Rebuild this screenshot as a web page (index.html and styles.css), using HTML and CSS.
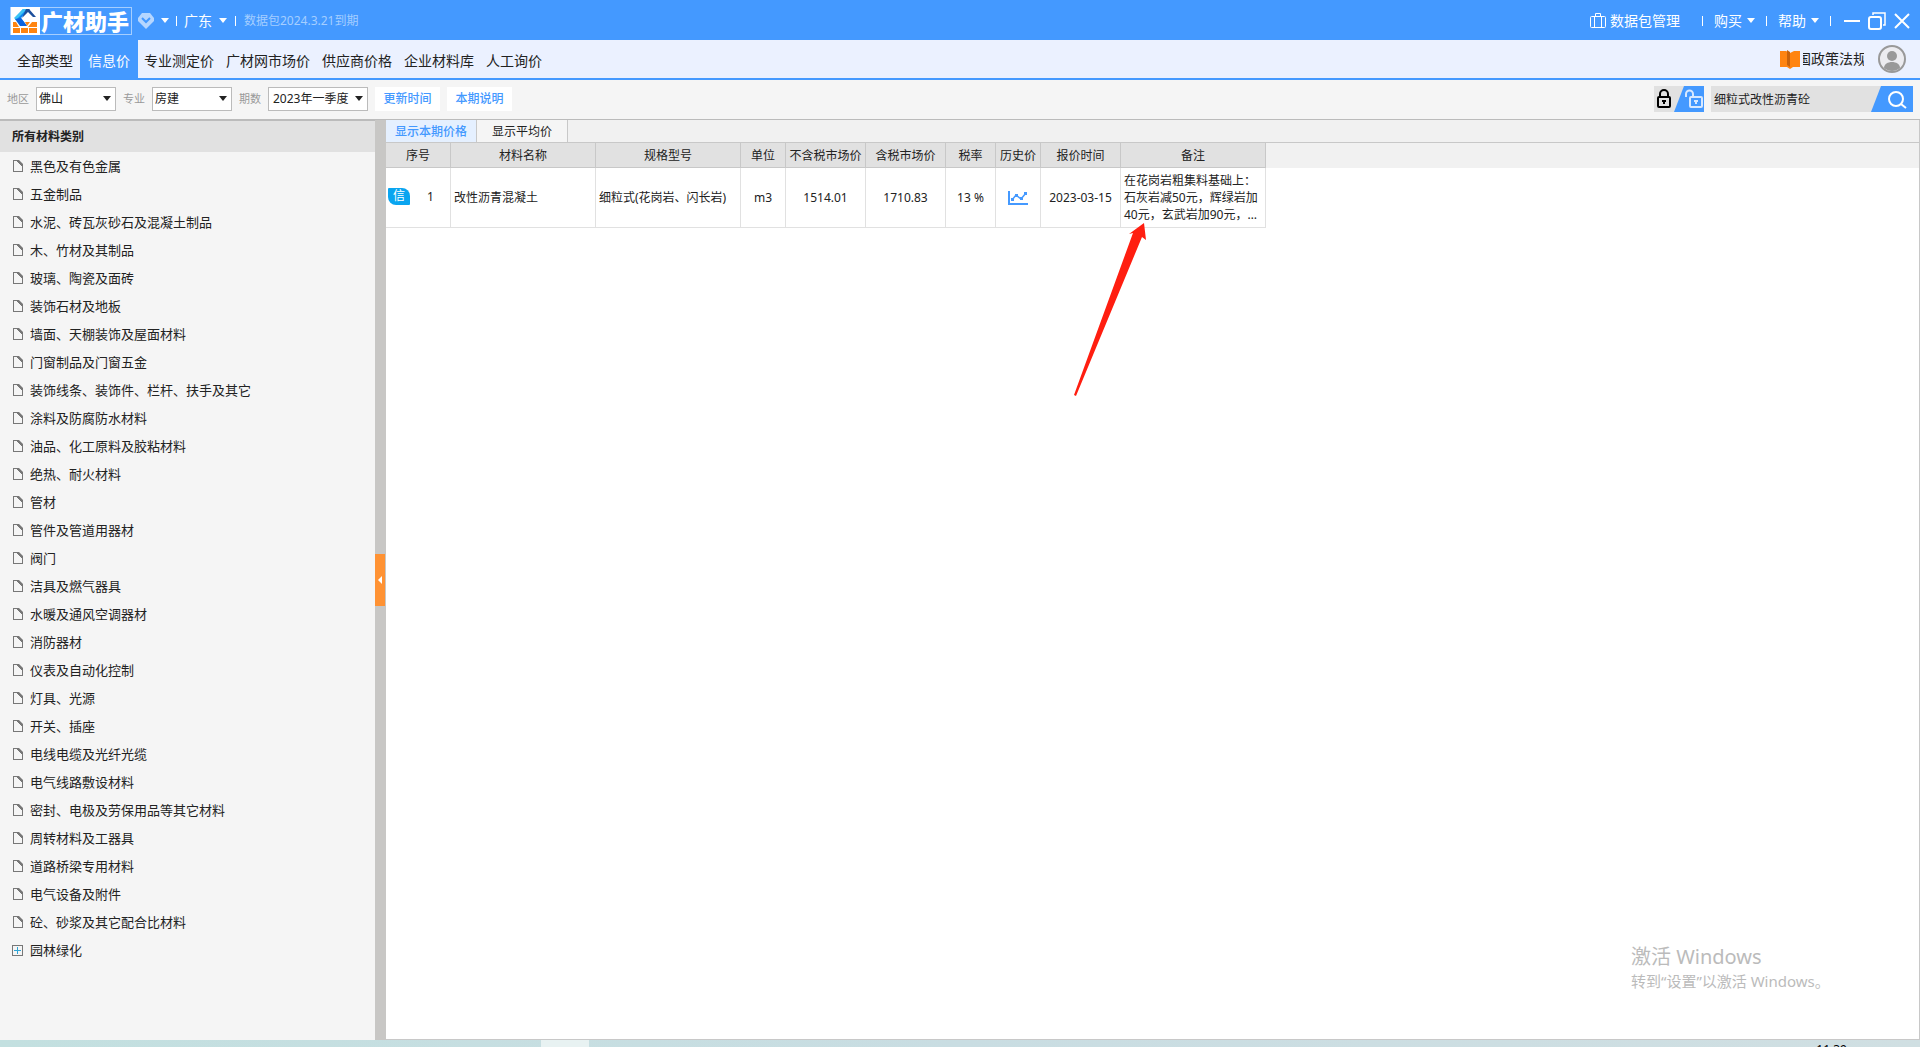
FILE: index.html
```html
<!DOCTYPE html>
<html lang="zh-CN">
<head>
<meta charset="utf-8">
<title>广材助手</title>
<link rel="stylesheet" href="styles.css">
</head>
<body>
<div class="app">
  <header class="titlebar">
    <div class="brand">
      <svg class="brand-mark" viewBox="0 0 29 28" aria-hidden="true">
        <rect width="29" height="28" fill="#fff"/>
        <path d="M12 2h7l-9 9 6 8h-5l-7-8z" fill="#0a84f0"/>
        <path d="M12 2h4L5 13l-2-2z" fill="#3cc4f5"/>
        <path d="M15 2h3l7 8h-3l-5-5-6 6z" fill="#1c4f9c"/>
        <path d="M4 12l5 7h7l-6-8z" fill="#0b63e0"/>
        <path d="M2 15h3l3 5H2zM14 15h5l-3 4zM21 15h5v5h-9zM2 21h7v5H2zM10 21h7v5h-7zM18 21h8v5h-8z" fill="#ff8410"/>
      </svg>
      <h1 class="brand-name">广材助手</h1>
    </div>
    <button class="title-btn gem" aria-label="会员">
      <svg width="16" height="16" viewBox="0 0 16 16"><path d="M4 0h8l4 5v3l-8 8-8-8V5z" fill="#b5d6ff"/><path d="M4 5l4 4 4-4" fill="none" stroke="#4499ff" stroke-width="2"/></svg>
      <i class="caret"></i>
    </button>
    <i class="bar"></i>
    <button class="title-btn region">广东<i class="caret"></i></button>
    <i class="bar"></i>
    <span class="expiry">数据包2024.3.21到期</span>
    <div class="title-right">
      <button class="title-btn package">
        <svg width="16" height="16" viewBox="0 0 16 16" fill="none" stroke="#fff" stroke-width="1"><rect x=".5" y="3.500" width="15" height="11" rx="1"/><path d="M5.500 3V.5h5V3M4.500 4v10M11.500 4v10"/></svg>
        数据包管理
      </button>
      <i class="bar"></i>
      <button class="title-btn">购买<i class="caret"></i></button>
      <i class="bar"></i>
      <button class="title-btn">帮助<i class="caret"></i></button>
      <i class="bar"></i>
      <div class="window-btns">
        <button class="title-btn" aria-label="最小化"><svg width="16" height="16" viewBox="0 0 16 16"><path d="M0 8h16" stroke="#fff" stroke-width="2"/></svg></button>
        <button class="title-btn" aria-label="还原"><svg width="18" height="18" viewBox="0 0 18 18" fill="none" stroke="#fff" stroke-width="2"><rect x="1" y="5" width="12" height="12" rx="2"/><path d="M5 3V1h12v12h-2" stroke-width="1.500"/></svg></button>
        <button class="title-btn" aria-label="关闭"><svg width="16" height="16" viewBox="0 0 16 16"><path d="M1 1l14 14M15 1L1 15" stroke="#fff" stroke-width="2"/></svg></button>
      </div>
    </div>
  </header>

  <nav class="nav">
    <a href="#" class="nav-first">全部类型</a>
    <a href="#" class="active">信息价</a>
    <a href="#">专业测定价</a>
    <a href="#">广材网市场价</a>
    <a href="#">供应商价格</a>
    <a href="#">企业材料库</a>
    <a href="#">人工询价</a>
    <div class="nav-right">
      <a href="#" class="policy">
        <svg width="20" height="19" viewBox="0 0 20 19"><path d="M0 1h6l4 2 4-2h6v16h-7l-3 2-3-2H0z" fill="#ff8410"/><path d="M7 0l3 2v15l-3-2z" fill="#c8620a"/></svg>
        <span class="policy-text">国政策法规</span>
      </a>
      <button class="avatar" aria-label="用户">
        <svg width="28" height="28" viewBox="0 0 28 28"><circle cx="14" cy="14" r="13" fill="#ececf0" stroke="#999" stroke-width="2"/><circle cx="14" cy="11" r="5" fill="#999"/><path d="M6 23c0-8 16-8 16 0-5 4-11 4-16 0z" fill="#999"/></svg>
      </button>
    </div>
  </nav>

  <form class="filters">
    <label for="area">地区</label>
    <span class="select"><select id="area"><option>佛山</option></select></span>
    <label for="major">专业</label>
    <span class="select"><select id="major"><option>房建</option></select></span>
    <label for="period">期数</label>
    <span class="select period"><select id="period"><option>2023年一季度</option></select></span>
    <button type="button" class="link-btn">更新时间</button>
    <button type="button" class="link-btn">本期说明</button>
    <div class="search-area">
      <button type="button" class="lock" aria-label="锁定">
        <svg width="50" height="26" viewBox="0 0 50 26">
          <rect width="50" height="26" fill="#e1e1e1"/><path d="M30 0h20v26H20z" fill="#4499ff"/>
          <rect x="4" y="11" width="12" height="10" rx="1" fill="none" stroke="#000" stroke-width="2"/><path d="M6 11V8a4 4 0 0 1 8 0v3" fill="none" stroke="#000" stroke-width="2"/><path d="M10 14v4M8 15h4" stroke="#000" stroke-width="2"/>
          <rect x="36" y="11" width="12" height="10" rx="1" fill="none" stroke="#d7e8ff" stroke-width="2"/><path d="M32 11V8a3 3 0 0 1 7 0v3" fill="none" stroke="#d7e8ff" stroke-width="2"/><path d="M42 14v4M40 15h4" stroke="#d7e8ff" stroke-width="2"/>
        </svg>
      </button>
      <div class="search">
        <input type="text" aria-label="搜索材料" value="细粒式改性沥青砼">
        <button type="button" aria-label="搜索">
          <svg width="42" height="26" viewBox="0 0 42 26"><path d="M10 0h32v26H0z" fill="#4499ff"/><circle cx="25" cy="13" r="7" fill="none" stroke="#fff" stroke-width="2"/><path d="M30 18l5 4" stroke="#fff" stroke-width="2"/></svg>
        </button>
      </div>
    </div>
  </form>

  <div class="workspace">
    <aside class="sidebar">
      <h2>所有材料类别</h2>
      <ul class="tree">
        <li>黑色及有色金属</li>
        <li>五金制品</li>
        <li>水泥、砖瓦灰砂石及混凝土制品</li>
        <li>木、竹材及其制品</li>
        <li>玻璃、陶瓷及面砖</li>
        <li>装饰石材及地板</li>
        <li>墙面、天棚装饰及屋面材料</li>
        <li>门窗制品及门窗五金</li>
        <li>装饰线条、装饰件、栏杆、扶手及其它</li>
        <li>涂料及防腐防水材料</li>
        <li>油品、化工原料及胶粘材料</li>
        <li>绝热、耐火材料</li>
        <li>管材</li>
        <li>管件及管道用器材</li>
        <li>阀门</li>
        <li>洁具及燃气器具</li>
        <li>水暖及通风空调器材</li>
        <li>消防器材</li>
        <li>仪表及自动化控制</li>
        <li>灯具、光源</li>
        <li>开关、插座</li>
        <li>电线电缆及光纤光缆</li>
        <li>电气线路敷设材料</li>
        <li>密封、电极及劳保用品等其它材料</li>
        <li>周转材料及工器具</li>
        <li>道路桥梁专用材料</li>
        <li>电气设备及附件</li>
        <li>砼、砂浆及其它配合比材料</li>
        <li class="branch">园林绿化</li>
      </ul>
    </aside>
    <div class="splitter"><button aria-label="收起"></button></div>
    <main class="content">
      <div class="tabs">
        <button class="on">显示本期价格</button>
        <button>显示平均价</button>
      </div>
      <div class="table-wrap">
        <table>
          <colgroup><col class="c-no"><col class="c-wide"><col class="c-wide"><col class="c-small"><col class="c-mid"><col class="c-mid"><col class="c-rate"><col class="c-small"><col class="c-mid"><col class="c-wide"></colgroup>
          <thead>
            <tr><th>序号</th><th>材料名称</th><th>规格型号</th><th>单位</th><th>不含税市场价</th><th>含税市场价</th><th>税率</th><th>历史价</th><th>报价时间</th><th>备注</th></tr>
          </thead>
          <tbody>
            <tr>
              <td><div class="no"><span class="tag">信</span><span>1</span></div></td>
              <td class="left">改性沥青混凝土</td>
              <td class="left">细粒式(花岗岩、闪长岩)</td>
              <td>m3</td>
              <td>1514.01</td>
              <td>1710.83</td>
              <td>13 %</td>
              <td><button class="history" aria-label="历史价"><svg width="20" height="14" viewBox="0 0 20 14" fill="none" stroke="#4499ff"><path d="M1 0v13h19" stroke-width="2"/><path d="M4 9l4-5 5 4 5-6" stroke-width="1.500"/><path d="M3 7h3v3H3zM7 3h3v3H7zM12 6h3v3h-3zM16 1h3v3h-3z" fill="#4499ff" stroke="none"/></svg></button></td>
              <td>2023-03-15</td>
              <td class="left"><div class="note">在花岗岩粗集料基础上：石灰岩减50元，辉绿岩加40元，玄武岩加90元，…</div></td>
            </tr>
          </tbody>
        </table>
      </div>
      <svg class="arrow" width="76" height="176" viewBox="0 0 76 176" aria-hidden="true"><path d="M70 0l2 17-4-3L2 173l-2-1L59 10l-4 1z" fill="#ff1e10"/></svg>
      <div class="watermark"><strong>激活 Windows</strong><span>转到“设置”以激活 Windows。</span></div>
    </main>
  </div>

  <footer class="taskbar"><i class="task"></i><time>11:39</time></footer>
</div>
</body>
</html>
```
FILE: styles.css
```css
*, *::before, *::after { box-sizing: border-box; }

body {
  margin: 0;
  font: 12px/16px "Noto Sans", "Noto Sans CJK SC", sans-serif;
  color: #222;
  background: #fff;
}

button, input, select { font: inherit; color: inherit; margin: 0; }
button { border: 0; padding: 0; background: none; cursor: pointer; }
a { color: inherit; text-decoration: none; }
svg { display: block; flex: none; }

.app {
  display: flex;
  flex-direction: column;
  height: 100vh;
  overflow: hidden;
}

/* Title bar */
.titlebar {
  display: flex;
  align-items: center;
  flex: none;
  height: 40px;
  padding: 1px 10px 0;
  background: #4499ff;
  color: #fff;
  font-size: 14px;
}
.brand {
  display: flex;
  align-items: center;
  width: 122px;
  height: 28px;
  border: 1px solid #a5ceff;
}
.brand-mark { width: 29px; height: 28px; }
.brand-name {
  margin: 0 0 0 1px;
  font-size: 22px;
  line-height: 26px;
  font-weight: 900;
  white-space: nowrap;
}
.title-btn { display: flex; align-items: center; gap: 5px; white-space: nowrap; }
.titlebar > .gem { gap: 7px; margin-left: 6px; }
.titlebar > .region { gap: 7px; }
.caret {
  border: 4px solid transparent;
  border-top: 5px solid #fff;
  border-bottom: 0;
}
.bar { width: 1px; height: 10px; background: #fff; flex: none; }
.titlebar > .bar { margin: 0 7px; }
.titlebar > .region + .bar { margin: 0 8px; }
.expiry { font-size: 12px; color: #a5ceff; }
.title-right {
  display: flex;
  align-items: center;
  gap: 11px;
  margin-left: auto;
}
.title-right .package { margin-right: 11px; gap: 4px; }
.window-btns { display: flex; align-items: center; gap: 8px; margin-left: 2px; }

/* Category navigation */
.nav {
  display: flex;
  flex: none;
  height: 40px;
  background: #ebf1ff;
  border-bottom: 2px solid #4499ff;
  font-size: 14px;
  line-height: 42px;
  white-space: nowrap;
}
.nav > a { padding: 0 6px; }
.nav > .nav-first { padding: 0 7px 0 17px; }
.nav > .active { padding: 0 8px; background: #4499ff; color: #fff; }
.nav-right { display: flex; align-items: center; margin-left: auto; padding-right: 14px; gap: 14px; }
.policy { display: flex; align-items: center; gap: 3px; line-height: 38px; }
.policy-text { width: 61px; overflow: hidden; text-indent: -6px; }

/* Filter row */
.filters {
  display: flex;
  align-items: center;
  flex: none;
  height: 39px;
  padding: 0 7px 1px;
  background: #f5f5f5;
}
.filters label { width: 22px; margin-right: 7px; font-size: 11px; color: #999; }
.select { position: relative; width: 80px; margin-right: 7px; }
.select.period { width: 100px; }
.select select {
  display: block;
  width: 100%;
  height: 24px;
  padding: 0 2px;
  appearance: none;
  border: 1px solid #bbb;
  border-radius: 0;
  background: #fff;
}
.select.period select { padding-left: 4px; }
.select::after {
  content: "";
  position: absolute;
  right: 5px;
  top: 9px;
  border: 4px solid transparent;
  border-top: 5px solid #222;
  border-bottom: 0;
  pointer-events: none;
}
.link-btn {
  width: 65px;
  height: 24px;
  margin-right: 7px;
  background: #fff;
  color: #4499ff;
  font-weight: 500;
}
.search-area { display: flex; gap: 7px; margin-left: auto; }
.search { display: flex; width: 202px; background: #e1e1e1; }
.search input {
  flex: 1;
  min-width: 0;
  height: 26px;
  padding: 0 3px;
  border: 0;
  background: none;
}

/* Workspace */
.workspace { display: flex; flex: 1; min-height: 0; border-top: 1px solid #bbb; }
.sidebar { width: 375px; flex: none; background: #f5f5f5; border-top: 1px solid #bbb; }
.sidebar h2 {
  margin: 0;
  padding: 0 12px;
  font-size: 12px;
  line-height: 31px;
  background: #e1e1e1;
}
.tree { margin: 0; padding: 0; list-style: none; font-size: 13px; line-height: 28px; }
.tree li { display: flex; align-items: center; gap: 7px; padding-left: 13px; }
.tree li::before {
  content: "";
  width: 10px;
  height: 12px;
  border: 1px solid #777;
  background: linear-gradient(225deg, #777 4px, transparent 4px);
  clip-path: polygon(0 0, 6px 0, 100% 4px, 100% 100%, 0 100%);
}
.tree .branch { padding-left: 12px; }
.tree .branch::before {
  width: 11px;
  height: 11px;
  background:
    linear-gradient(#2fa5d5, #2fa5d5) center / 7px 1px no-repeat,
    linear-gradient(#2fa5d5, #2fa5d5) center / 1px 7px no-repeat;
  clip-path: none;
}
.splitter { display: flex; align-items: center; width: 11px; flex: none; background: #c8c7c5; }
.splitter button {
  display: flex;
  align-items: center;
  justify-content: center;
  width: 10px;
  height: 52px;
  background: #ff9233;
}
.splitter button::before {
  content: "";
  border: 4px solid transparent;
  border-right-color: #fff;
  border-left: 0;
}
.content {
  position: relative;
  flex: 1;
  min-width: 0;
  border-right: 1px solid #c8c8c8;
  border-bottom: 1px solid #c8c8c8;
}

/* Price view tabs */
.tabs { display: flex; height: 23px; background: #f1f1f1; border-bottom: 1px solid #c8c8c8; }
.tabs button { width: 91px; padding-top: 2px; border-right: 1px solid #c8c8c8; background: #f5f5f5; }
.tabs .on { background: #e5f0ff; color: #4499ff; font-weight: 500; }

/* Price table */
.table-wrap { background: linear-gradient(#f1f1f1 25px, #fff 25px); }
table { width: 880px; table-layout: fixed; border-collapse: separate; border-spacing: 0; }
.c-no { width: 65px; }
.c-wide { width: 145px; }
.c-small { width: 45px; }
.c-mid { width: 80px; }
.c-rate { width: 50px; }
th {
  height: 25px;
  padding: 2px 0 0;
  font-weight: 400;
  white-space: nowrap;
  background: #e1e1e1;
  border-right: 1px solid #c8c8c8;
  border-bottom: 1px solid #c8c8c8;
}
td {
  height: 60px;
  padding: 0;
  text-align: center;
  white-space: nowrap;
  border-right: 1px solid #e1e1e1;
  border-bottom: 1px solid #e1e1e1;
}
td.left { padding: 0 3px; text-align: left; }
.no { display: flex; align-items: center; gap: 17px; padding: 0 0 2px 2px; }
.tag {
  width: 22px;
  height: 17px;
  border-radius: 1px 8px 1px 8px;
  background: #0aa5f0;
  color: #fff;
  text-align: center;
}
.history { display: block; margin: 0 auto; }
.note { line-height: 17px; white-space: normal; }

/* Marks over the content */
.arrow { position: absolute; left: 688px; top: 103px; }
.watermark {
  position: absolute;
  right: 90px;
  bottom: 47px;
  display: flex;
  flex-direction: column;
  width: 198px;
  color: #bbb;
  white-space: nowrap;
  font-size: 15px;
  line-height: 22px;
}
.watermark strong { font-size: 20px; line-height: 26px; font-weight: 400; }

.taskbar {
  display: flex;
  flex: none;
  height: 7px;
  padding: 0 73px 0 541px;
  overflow: hidden;
  background: linear-gradient(90deg, #c3e0e0, #c9dde2 50%, #d0dfe2);
}
.task { width: 48px; background: #e8f2f2; }
.taskbar time { margin-left: auto; padding-top: 2px; font-size: 12px; line-height: 16px; color: #000; }
```
